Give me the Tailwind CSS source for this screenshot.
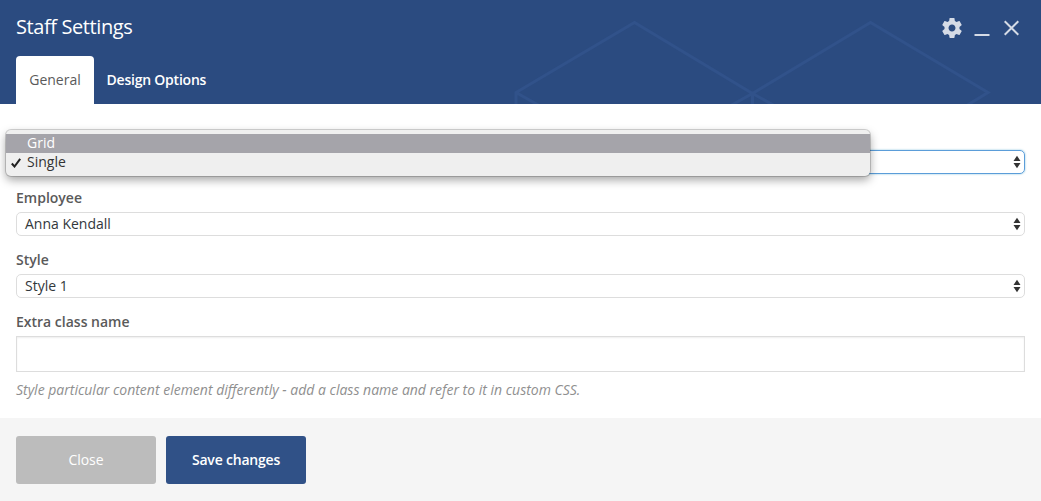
<!DOCTYPE html>
<html lang="en">
<head>
<meta charset="utf-8">
<title>Staff Settings</title>
<script src="https://cdn.jsdelivr.net/npm/@tailwindcss/browser@4"></script>
</head>
<body class="flex h-[501px] w-[1041px] flex-col overflow-hidden bg-white font-['Open_Sans',sans-serif] text-sm text-[#5a5a5a]">
<header class="relative flex h-[104px] shrink-0 flex-col justify-between bg-[#2b4b80] px-4 text-white">
  <svg class="absolute inset-0" width="1041" height="104" viewBox="0 0 1041 104" fill="none" stroke="#31528a" stroke-width="3">
    <path d="M516 104V92.500L634.500 22.500L752.500 93.500L870.500 22.500L988 92.500L966 106M516 92.500L540 106M752.500 93.500V104M730 106L752.500 93.500L775 106"/>
  </svg>
  <div class="relative flex h-[54px] items-center justify-between">
    <h1 class="text-[20px] tracking-[-0.4px]">Staff Settings</h1>
    <div class="flex items-center gap-3 text-[#d5dbe6]">
      <svg class="mt-0.5 mr-[-2px]" width="24" height="24" viewBox="0 0 24 24" fill="currentColor"><path d="M19.430 12.980c.04-.32.07-.64.07-.98s-.03-.66-.07-.98l2.110-1.650c.19-.15.24-.42.12-.64l-2-3.460c-.12-.22-.39-.3-.61-.22l-2.490 1c-.52-.4-1.080-.73-1.690-.98l-.38-2.650C14.460 2.180 14.250 2 14 2h-4c-.25 0-.46.18-.49.42l-.38 2.650c-.61.25-1.170.59-1.690.98l-2.490-1c-.23-.09-.49 0-.61.22l-2 3.460c-.13.22-.07.49.12.64l2.110 1.650c-.04.32-.07.65-.07.98s.03.66.07.98l-2.110 1.650c-.19.15-.24.42-.12.64l2 3.460c.12.22.39.3.61.22l2.490-1c.52.4 1.080.73 1.690.98l.38 2.650c.03.24.24.42.49.42h4c.25 0 .46-.18.49-.42l.38-2.650c.61-.25 1.170-.59 1.690-.98l2.490 1c.23.09.49 0 .61-.22l2-3.460c.12-.22.07-.49-.12-.64l-2.110-1.650zM12 15.500c-1.930 0-3.500-1.570-3.500-3.500s1.570-3.500 3.500-3.500 3.500 1.570 3.500 3.500-1.570 3.500-3.500 3.500z"/></svg>
      <svg class="mt-0.5" width="16" height="20" viewBox="0 0 16 20" fill="currentColor"><path d="M.5 16h15v2H.5z"/></svg>
      <svg class="mt-0.5 mr-[6px] ml-0.5" width="15" height="16" viewBox="0 0 15 16" fill="none" stroke="currentColor" stroke-width="2"><path d="M.7 1.200L14.300 14.800M14.300 1.200L.7 14.800"/></svg>
    </div>
  </div>
  <nav class="relative flex h-12">
    <a class="flex w-[78px] items-center justify-center rounded-t-[4px] bg-white text-[#5a5a5a]">General</a>
    <a class="flex items-center px-[12.5px] font-semibold tracking-[-0.22px]">Design Options</a>
  </nav>
</header>

<main class="relative h-[314px] shrink-0 px-4 pt-[46px]">
  <div class="flex h-6 items-center justify-end rounded-[5px] border border-[#5b9dd9] pr-[3px] shadow-[0_0_2px_rgba(30,140,190,0.6)]">
    <svg width="8" height="14" viewBox="0 0 8 14" fill="#333"><path d="M4 .8L7.500 6H.5zM4 13.200L7.500 8H.5z"/></svg>
  </div>
  <div class="mt-[14px] flex h-5 items-center font-semibold">Employee</div>
  <div class="mt-1 flex h-6 items-center justify-between rounded-[5px] border border-[#ddd] pr-[3px] pl-2 text-[#32373c]">
    <span>Anna Kendall</span>
    <svg width="8" height="14" viewBox="0 0 8 14" fill="#333"><path d="M4 .8L7.500 6H.5zM4 13.200L7.500 8H.5z"/></svg>
  </div>
  <div class="mt-[14px] flex h-5 items-center font-semibold">Style</div>
  <div class="mt-1 flex h-6 items-center justify-between rounded-[5px] border border-[#ddd] pr-[3px] pl-2 text-[#32373c]">
    <span>Style 1</span>
    <svg width="8" height="14" viewBox="0 0 8 14" fill="#333"><path d="M4 .8L7.500 6H.5zM4 13.200L7.500 8H.5z"/></svg>
  </div>
  <div class="mt-[14px] flex h-5 items-center font-semibold">Extra class name</div>
  <div class="mt-1 h-9 border border-[#ddd] shadow-[inset_0_1px_2px_rgba(0,0,0,0.07)]"></div>
  <p class="mt-2 flex h-5 items-center whitespace-nowrap text-[#8f8f8f] italic">Style particular content element differently - add a class name and refer to it in custom CSS.</p>

  <div class="absolute top-[26px] left-[6px] h-[46px] w-[864px] rounded-[5px] bg-[#efefef] pt-1 shadow-[0_0_0_1px_rgba(0,0,0,0.16),0_4px_10px_rgba(0,0,0,0.36)]">
    <div class="flex h-[19px] items-center bg-[#a5a4aa] pb-0.5 pl-[21px] text-white">Grid</div>
    <div class="flex h-[19px] items-center pb-0.5 text-[#333]">
      <svg class="mt-0.5 mr-[6px] ml-[5px]" width="10" height="10" viewBox="0 0 10 10" fill="none" stroke="#222" stroke-width="2"><path d="M.8 5.500L3.500 8.500L9.200 .8"/></svg>Single
    </div>
  </div>
</main>

<footer class="flex flex-1 gap-[10px] bg-[#f5f5f5] px-4 pt-[18px] text-white">
  <button class="h-12 w-[140px] rounded-[3px] bg-[#bcbcbc] font-medium tracking-[-0.1px]">Close</button>
  <button class="h-12 w-[140px] rounded-[3px] bg-[#305187] font-semibold tracking-[-0.2px]">Save changes</button>
</footer>
</body>
</html>
